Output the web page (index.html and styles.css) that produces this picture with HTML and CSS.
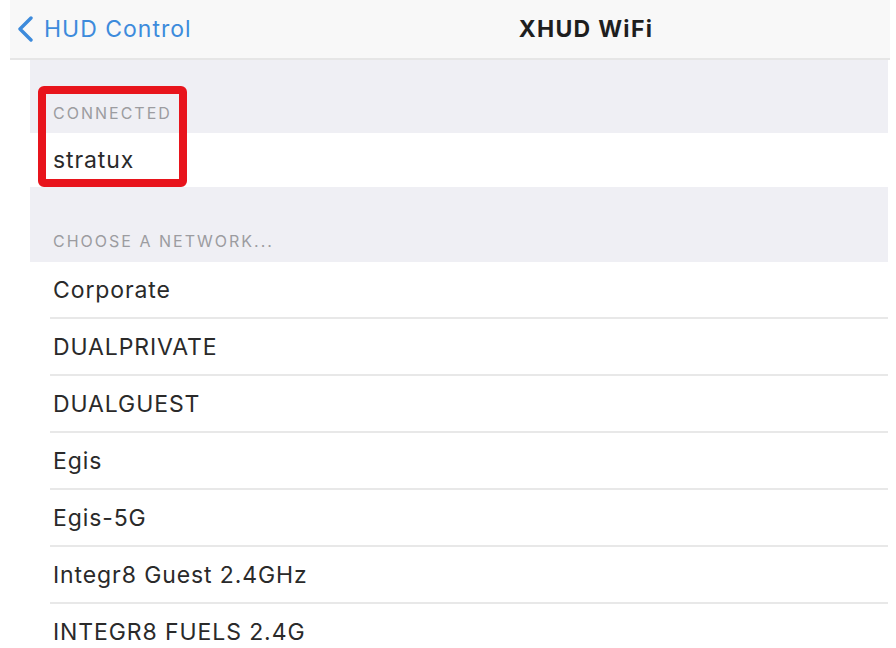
FILE: index.html
```html
<!DOCTYPE html>
<html>
<head>
<meta charset="utf-8">
<link rel="stylesheet" href="styles.css">
</head>
<body>
<div class="nav">
  <a class="back">
    <svg class="chev" width="20" height="26" viewBox="0 0 20 26"><path d="M15 2 L4 13 L15 24" fill="none" stroke="#3d8bdc" stroke-width="3.4" stroke-linecap="round" stroke-linejoin="round"/></svg>
    <span>HUD Control</span>
  </a>
  <div class="title">XHUD WiFi</div>
</div>
<div class="table">
  <div class="section-header first">CONNECTED</div>
  <div class="row single"><span>stratux</span></div>
  <div class="section-header second">CHOOSE A NETWORK...</div>
  <div class="list">
    <div class="row"><span>Corporate</span></div>
    <div class="row"><span>DUALPRIVATE</span></div>
    <div class="row"><span>DUALGUEST</span></div>
    <div class="row"><span>Egis</span></div>
    <div class="row"><span>Egis-5G</span></div>
    <div class="row"><span>Integr8 Guest 2.4GHz</span></div>
    <div class="row"><span>INTEGR8 FUELS 2.4G</span></div>
  </div>
  <div class="highlight"></div>
</div>
</body>
</html>
```

FILE: styles.css
```css
html, body {
  margin: 0;
  padding: 0;
  background: #ffffff;
  font-family: Inter, "Liberation Sans", sans-serif;
  overflow: hidden;
}
body {
  width: 896px;
  height: 648px;
}
.nav {
  margin-left: 10px;
  width: 880px;
  height: 58px;
  background: #f8f8f8;
  border-bottom: 2px solid #e6e6e6;
  display: flex;
  align-items: center;
  box-sizing: content-box;
}
.back {
  display: flex;
  align-items: center;
  margin-left: 6px;
  color: #3d8bdc;
  font-size: 23px;
  letter-spacing: 1px;
}
.back span {
  margin-left: 8px;
}
.chev {
  display: block;
}
.title {
  margin-left: 327px;
  font-size: 23px;
  font-weight: 700;
  color: #1e1e1e;
  letter-spacing: 1.3px;
}
.table {
  position: relative;
  margin-left: 30px;
  width: 858px;
}
.section-header {
  background: #efeff4;
  color: #9c9ca0;
  font-size: 16px;
  line-height: 18px;
  padding-left: 23px;
  display: flex;
  align-items: flex-end;
  box-sizing: border-box;
  letter-spacing: 2px;
}
.section-header.first {
  height: 73px;
  padding-bottom: 11px;
}
.section-header.second {
  height: 75px;
  padding-bottom: 12px;
}
.row {
  height: 57px;
  background: #ffffff;
  padding-left: 20px;
  box-sizing: border-box;
}
.row span {
  display: flex;
  align-items: center;
  height: 100%;
  padding-left: 3px;
  border-bottom: 2px solid #e8e8e8;
  box-sizing: border-box;
  font-size: 23px;
  color: #2a2a2a;
  letter-spacing: 0.9px;
}
.row.single {
  height: 54px;
}
.row.single span {
  border-bottom: none;
}
.highlight {
  position: absolute;
  left: 8px;
  top: 26px;
  width: 149px;
  height: 101px;
  border: 8px solid #e8141c;
  border-radius: 6px;
  box-sizing: border-box;
}
```
